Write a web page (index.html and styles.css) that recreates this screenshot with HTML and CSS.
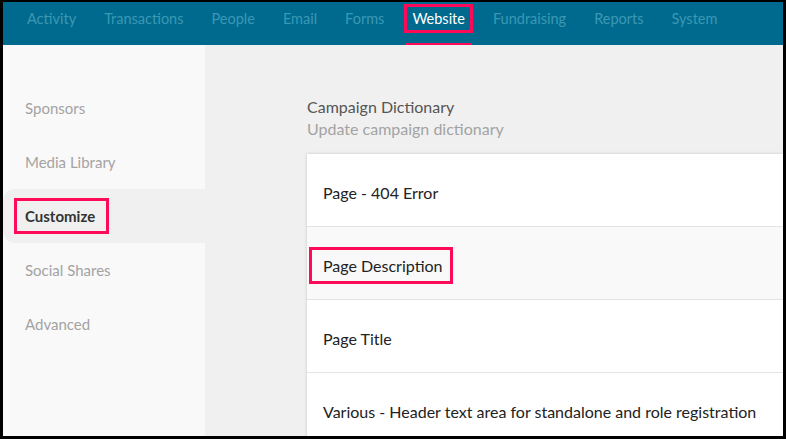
FILE: index.html
```html
<!DOCTYPE html>
<html lang="en">
  <head>
    <meta charset="UTF-8" />
    <meta name="viewport" content="width=device-width, initial-scale=1.0" />
    <title>Website - Customize</title>
    <link rel="stylesheet" href="styles.css">
  </head>
  <body>
    <div class="frame">
      <!-- top menu -->
      <nav class="topnav">
        <a href="#">Activity</a>
        <a href="#">Transactions</a>
        <a href="#">People</a>
        <a href="#">Email</a>
        <a href="#">Forms</a>
        <a href="#" class="active"><span class="mark">Website</span></a>
        <a href="#">Fundraising</a>
        <a href="#">Reports</a>
        <a href="#">System</a>
      </nav>
      <div class="content">
        <!-- left menu -->
        <ul class="sidebar">
          <li>Sponsors</li>
          <li>Media Library</li>
          <li class="current"><span class="mark">Customize</span></li>
          <li>Social Shares</li>
          <li>Advanced</li>
        </ul>
        <!-- dictionary list -->
        <div class="main">
          <h2 class="title">Campaign Dictionary</h2>
          <p class="subtitle">Update campaign dictionary</p>
          <ul class="card">
            <li>Page - 404 Error</li>
            <li class="shade"><span class="mark">Page Description</span></li>
            <li>Page Title</li>
            <li>Various - Header text area for standalone and role registration</li>
          </ul>
        </div>
      </div>
    </div>
  </body>
</html>
```

FILE: styles.css
```css
* {
  margin: 0;
  padding: 0;
  box-sizing: border-box;
}
li {
  list-style: none;
}
body {
  background: #000;
  font-family: Lato, "Open Sans", sans-serif;
  overflow: hidden;
}
/* black edge around the shot */
.frame {
  width: 780px;
  height: 434px;
  margin: 2px 3px 3px 3px;
  overflow: hidden;
  display: flex;
  flex-direction: column;
}
/* top menu */
.topnav {
  height: 43px;
  flex: none;
  display: flex;
  gap: 14px;
  padding-left: 17px;
  background: #006a8e;
}
.topnav a {
  display: block;
  padding: 4px 7px 12px;
  font-size: 14.5px;
  line-height: 25px;
  color: #3b98b4;
  text-decoration: none;
  border-bottom: 2px solid transparent;
}
.topnav .active {
  color: #fff;
  border-bottom-color: #ff0a58;
}
.topnav .mark {
  outline: 3px solid #ff0a58;
  outline-offset: 0;
  padding: 3px 5px;
  margin: 0 -5px;
}
.content {
  flex: 1;
  display: flex;
  background: #f0f0f0;
}
/* left menu */
.sidebar {
  width: 202px;
  flex: none;
  padding-top: 36px;
  background: #f9f9f9;
}
.sidebar li {
  height: 54px;
  line-height: 54px;
  padding-left: 22px;
  font-size: 15px;
  color: #a3a3a3;
}
.sidebar .current {
  background: #f0f0f0;
  border-radius: 12px 0 0 12px;
  color: #333;
  font-weight: bold;
}
.sidebar .mark {
  border: 3px solid #ff0a58;
  padding: 6px 11px 6px 8px;
  margin: 0 -14px 0 -11px;
}
/* right side */
.main {
  flex: 1;
  padding: 51px 0 0 102px;
}
.title {
  font-size: 16px;
  font-weight: normal;
  line-height: 22px;
  color: #555;
}
.subtitle {
  font-size: 16px;
  line-height: 22px;
  color: #a3a3a3;
}
.card {
  margin-top: 14px;
  background: #fff;
  box-shadow: 0 0 3px rgba(0, 0, 0, 0.18);
}
.card li {
  height: 73px;
  padding: 25px 16px 0;
  line-height: 27px;
  font-size: 16px;
  color: #222;
  border-bottom: 1px solid #e4e4e4;
  white-space: nowrap;
}
.card .shade {
  background: #f9f9f9;
}
.card .mark {
  border: 3px solid #ff0a58;
  padding: 6px 7px 6px 11px;
  margin: 0 -10px 0 -14px;
}
```
